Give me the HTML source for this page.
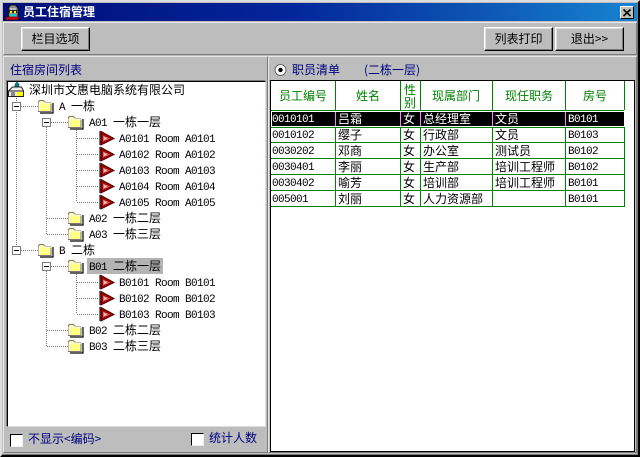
<!DOCTYPE html>
<html><head><meta charset="utf-8">
<style>
*{box-sizing:border-box;margin:0;padding:0}
html,body{width:640px;height:457px;overflow:hidden;background:#bdbdbd}
body{position:relative;font:12px/14px "WenQuanYi Zen Hei","Noto Sans CJK SC",sans-serif;color:#000}
.a{position:absolute}
.t{position:absolute;white-space:pre;line-height:14px}
.btn{position:absolute;background:#bdbdbd;border:1px solid;border-color:#fff #000 #000 #fff;box-shadow:inset -1px -1px 0 #7b7b7b,inset 1px 1px 0 #dedede;text-align:center;line-height:22px}
.chk{position:absolute;width:13px;height:13px;background:#fff;border:1px solid;border-color:#000 #eee #eee #000}
svg{position:absolute;left:0;top:0}
svg text{font-size:12px;fill:#000;font-family:"WenQuanYi Zen Hei","Noto Sans CJK SC",sans-serif}
svg text.m{font-family:"Liberation Mono",monospace;font-size:11px;letter-spacing:-.6px}
</style></head><body>
<!-- window frame -->
<div class="a" style="left:0;top:0;width:640px;height:457px;border:2px solid;border-color:#ddd #000 #000 #ddd;box-shadow:inset -1px -1px 0 #7b7b7b"></div>
<!-- title bar -->
<div class="a" style="left:3px;top:3px;width:634px;height:18px;background:linear-gradient(90deg,#000f78 0,#03259a 45%,#0d55b4 75%,#1784d0 100%)"></div>
<svg width="30" height="22">
<path d="M8.500 18V8l2-3h5l2.500 3v10z" fill="#8a8a8a" stroke="#111"/>
<rect x="10" y="8" width="6" height="2" fill="#bbb"/>
<rect x="9" y="10" width="8" height="3" fill="#222"/>
<rect x="10" y="11" width="2" height="2" fill="#ff0"/><rect x="14" y="11" width="2" height="2" fill="#ff0"/>
<rect x="10" y="14" width="6" height="2" fill="#0cc"/>
<path d="M5 17h14l-1 3H6z" fill="#c00020" stroke="#300" stroke-width=".6"/>
</svg>
<div class="t" style="left:23px;top:5px;color:#fff;font-weight:bold;font-size:12px">员工住宿管理</div>
<div class="a" style="left:620px;top:6px;width:14px;height:13px;background:#bdbdbd;border:1px solid;border-color:#fff #000 #000 #fff"></div>
<svg width="640" height="24"><path d="M623.500 9.500l7 6.500M630.500 9.500l-7 6.500" stroke="#000" stroke-width="1.600" fill="none"/></svg>

<!-- toolbar -->
<div class="a" style="left:3px;top:22px;width:634px;height:33px;border:1px solid;border-color:#e8e8e8 #7b7b7b #7b7b7b #e8e8e8"></div>
<div class="btn" style="left:21px;top:27px;width:69px;height:24px">栏目选项</div>
<div class="btn" style="left:484px;top:27px;width:69px;height:24px">列表打印</div>
<div class="btn" style="left:555px;top:27px;width:69px;height:24px">退出&gt;&gt;</div>

<!-- left panel -->
<div class="a" style="left:3px;top:56px;width:265px;height:397px;border:1px solid;border-color:#e8e8e8 #7b7b7b #7b7b7b #e8e8e8"></div>
<div class="t" style="left:10px;top:63px;color:#000080">住宿房间列表</div>
<div class="a" style="left:7px;top:81px;width:259px;height:346px;background:#fff;border:1px solid;border-color:#000 #ddd #ddd #000;box-shadow:-1px -1px 0 #7b7b7b"></div>
<div class="a" style="left:87px;top:258px;width:76px;height:16px;background:#b4b4b4"></div>

<svg width="640" height="457">
<defs>
<g id="fo">
<path d="M1.500 12.500V2.500l1-1h4l1.500 2h6v9z" fill="#ffff88" stroke="#777"/>
<path d="M2 12V4h13" fill="none" stroke="#fff"/>
<path d="M16 4v10H3" fill="none" stroke="#000" stroke-width="1.200"/>
</g>
<g id="fl">
<path d="M1 0v14" stroke="#444" stroke-width="1.500"/>
<path d="M2 .5l13 7L2 14z" fill="#a80000" stroke="#500"/>
<path d="M4 4.500l7 3-7 3z" fill="#d87070"/>
<path d="M5 6l3 1.500-3 1.500z" fill="#ffd0d0"/>
</g>
<g id="bx">
<rect x=".5" y=".5" width="8" height="8" fill="#fff" stroke="#7b7b7b"/>
<path d="M2 4.500h5" stroke="#000"/>
</g>
</defs>
<g stroke="#777" stroke-dasharray="1 1" fill="none">
<path d="M16.500 96V246M46.500 127V234M76.500 130V202M46.500 271V346M76.500 274V314"/>
<path d="M21 106.500H38M21 250.500H38M51 122.500H68M51 266.500H68M47 218.500H68M47 234.500H68M47 330.500H68M47 346.500H68"/>
<path d="M77 138.500H98M77 154.500H98M77 170.500H98M77 186.500H98M77 202.500H98M77 282.500H98M77 298.500H98M77 314.500H98"/>
</g>
<use href="#bx" x="12" y="102"/><use href="#bx" x="42" y="118"/><use href="#bx" x="12" y="246"/><use href="#bx" x="42" y="262"/>
<use href="#fo" x="37" y="99"/><use href="#fo" x="67" y="115"/><use href="#fo" x="67" y="211"/><use href="#fo" x="67" y="227"/>
<use href="#fo" x="37" y="243"/><use href="#fo" x="67" y="259"/><use href="#fo" x="67" y="323"/><use href="#fo" x="67" y="339"/>
<use href="#fl" x="99" y="131"/><use href="#fl" x="99" y="147"/><use href="#fl" x="99" y="163"/><use href="#fl" x="99" y="179"/><use href="#fl" x="99" y="195"/>
<use href="#fl" x="99" y="275"/><use href="#fl" x="99" y="291"/><use href="#fl" x="99" y="307"/>
<!-- root icon -->
<path d="M17 82l2 2v3h-4v-3z" fill="#008080" stroke="#044" stroke-width=".5"/>
<path d="M8.500 96.500V91l4-4h9l2 4v5.500z" fill="#eee" stroke="#222"/>
<path d="M9 91h14" stroke="#222"/>
<path d="M17 92h6v4h-6z" fill="#ff0"/>
<path d="M11 93h4M11 95h4" stroke="#222"/>
<text x="29" y="94">深圳市文惠电脑系统有限公司</text>
<text class="m" x="59" y="110">A</text><text x="71" y="110">一栋</text>
<text class="m" x="89" y="126">A01</text><text x="113" y="126">一栋一层</text>
<text class="m" x="119" y="142">A0101 Room A0101</text>
<text class="m" x="119" y="158">A0102 Room A0102</text>
<text class="m" x="119" y="174">A0103 Room A0103</text>
<text class="m" x="119" y="190">A0104 Room A0104</text>
<text class="m" x="119" y="206">A0105 Room A0105</text>
<text class="m" x="89" y="222">A02</text><text x="113" y="222">一栋二层</text>
<text class="m" x="89" y="238">A03</text><text x="113" y="238">一栋三层</text>
<text class="m" x="59" y="254">B</text><text x="71" y="254">二栋</text>
<text class="m" x="89" y="270">B01</text><text x="113" y="270">二栋一层</text>
<text class="m" x="119" y="286">B0101 Room B0101</text>
<text class="m" x="119" y="302">B0102 Room B0102</text>
<text class="m" x="119" y="318">B0103 Room B0103</text>
<text class="m" x="89" y="334">B02</text><text x="113" y="334">二栋二层</text>
<text class="m" x="89" y="350">B03</text><text x="113" y="350">二栋三层</text>
</svg>

<div class="chk" style="left:10px;top:434px"></div>
<div class="t" style="left:28px;top:432px;color:#000080">不显示&lt;编码&gt;</div>
<div class="chk" style="left:191px;top:433px"></div>
<div class="t" style="left:209px;top:431px;color:#000080">统计人数</div>

<!-- right panel -->
<div class="a" style="left:268px;top:56px;width:369px;height:397px;border:1px solid;border-color:#e8e8e8 #7b7b7b #7b7b7b #e8e8e8"></div>
<svg width="640" height="82">
<circle cx="280.500" cy="70" r="5.500" fill="#fff" stroke="#666"/><circle cx="280.500" cy="70" r="2.200" fill="#000"/>
</svg>
<div class="t" style="left:292px;top:63px;color:#000080">职员清单</div>
<div class="t" style="left:364px;top:63px;color:#000080">(二栋一层)</div>
<div class="a" style="left:270px;top:80px;width:365px;height:372px;background:#fff;border:1px solid #000"></div>

<svg width="640" height="457">
<rect x="271.500" y="111.500" width="353" height="15" fill="#000" stroke="#fff"/>
<g stroke="#007f00" fill="none">
<path d="M335.500 81V110M400.500 81V110M420.500 81V110M492.500 81V110M565.500 81V110M624.500 81V110"/>
<path d="M335.500 127V206M400.500 127V206M420.500 127V206M492.500 127V206M565.500 127V206M624.500 127V206"/>
<path d="M271 110.500H624M271 127.500H625M271 142.500H625M271 158.500H625M271 174.500H625M271 190.500H625M271 206.500H625"/>
</g>
<path d="M335.500 112v14M400.500 112v14M420.500 112v14M492.500 112v14M565.500 112v14" stroke="#ff80ff"/>
<g text-anchor="middle">
<text x="303" y="100" style="fill:#008000">员工编号</text>
<text x="368" y="100" style="fill:#008000">姓名</text>
<text x="410" y="94" style="fill:#008000">性</text>
<text x="410" y="107" style="fill:#008000">别</text>
<text x="456" y="100" style="fill:#008000">现属部门</text>
<text x="529" y="100" style="fill:#008000">现任职务</text>
<text x="595" y="100" style="fill:#008000">房号</text>
</g>
<g>
<text class="m" x="272" y="122" style="fill:#fff">0010101</text>
<text x="338" y="123" style="fill:#fff">吕霜</text><text x="403" y="123" style="fill:#fff">女</text>
<text x="423" y="123" style="fill:#fff">总经理室</text><text x="495" y="123" style="fill:#fff">文员</text>
<text class="m" x="568" y="122" style="fill:#fff">B0101</text>
</g>
<g>
<text class="m" x="272" y="138">0010102</text><text x="338" y="139">缨子</text><text x="403" y="139">女</text><text x="423" y="139">行政部</text><text x="495" y="139">文员</text><text class="m" x="568" y="138">B0103</text>
<text class="m" x="272" y="154">0030202</text><text x="338" y="155">邓商</text><text x="403" y="155">女</text><text x="423" y="155">办公室</text><text x="495" y="155">测试员</text><text class="m" x="568" y="154">B0102</text>
<text class="m" x="272" y="170">0030401</text><text x="338" y="171">李丽</text><text x="403" y="171">女</text><text x="423" y="171">生产部</text><text x="495" y="171">培训工程师</text><text class="m" x="568" y="170">B0102</text>
<text class="m" x="272" y="186">0030402</text><text x="338" y="187">喻芳</text><text x="403" y="187">女</text><text x="423" y="187">培训部</text><text x="495" y="187">培训工程师</text><text class="m" x="568" y="186">B0101</text>
<text class="m" x="272" y="202">005001</text><text x="338" y="203">刘丽</text><text x="403" y="203">女</text><text x="423" y="203">人力资源部</text><text class="m" x="568" y="202">B0101</text>
</g>
</svg>
</body></html>
